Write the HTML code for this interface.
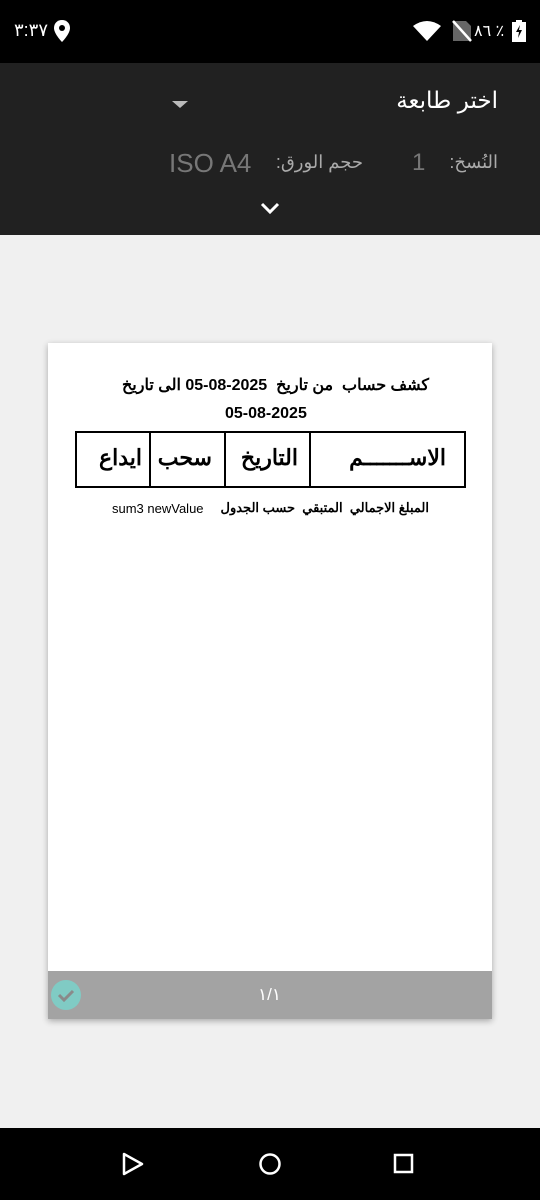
<!DOCTYPE html>
<html><head><meta charset="utf-8"><style>
body{margin:0;width:540px;height:1200px;background:#f0f0f0;position:relative;overflow:hidden;font-family:"Liberation Sans","Noto Sans CJK SC",sans-serif}
.abs{position:absolute}
.t{white-space:nowrap}
</style></head><body>
<div class="abs" style="left:0;top:0;width:540px;height:63px;background:#000"></div>
<div class="abs t" style="left:14px;top:20px;color:#fff;font-size:18px">٣:٣٧</div>
<svg class="abs" style="left:52px;top:19px" width="20" height="24" viewBox="0 0 20 24"><path d="M10 1C5 1 2 4.6 2 9c0 6 8 14 8 14s8-8 8-14c0-4.4-3-8-8-8z" fill="#fff"/><circle cx="10" cy="9" r="3" fill="#000"/></svg>
<svg class="abs" style="left:412px;top:20px" width="30" height="22" viewBox="0 0 30 22"><path d="M1 6Q15 -4 29 6L15 21Z" fill="#fff"/></svg>
<svg class="abs" style="left:452px;top:20px" width="20" height="22" viewBox="0 0 20 22"><path d="M4 1h10l5 5v15H1V1z" fill="#666"/><path d="M1 1L19 21" stroke="#fff" stroke-width="2.5"/></svg>
<div class="abs t" style="left:474px;top:21px;color:#fff;font-size:16px">٨٦ ٪</div>
<svg class="abs" style="left:512px;top:20px" width="14" height="22" viewBox="0 0 14 22"><rect x="4" y="0" width="6" height="3" fill="#fff"/><rect x="0" y="2" width="14" height="20" fill="#fff"/><path d="M8 5L4 12h3l-1 6 4-8H7z" fill="#000"/></svg>

<div class="abs" style="left:0;top:63px;width:540px;height:172px;background:#212121"></div>
<div class="abs t" dir="rtl" style="right:42px;top:87px;color:#fff;font-size:23px">اختر طابعة</div>
<div class="abs" style="left:172px;top:101px;width:0;height:0;border-left:8px solid transparent;border-right:8px solid transparent;border-top:7px solid #bbb"></div>
<div class="abs t" dir="rtl" style="right:42px;top:152px;color:#aaa;font-size:18px">النُسخ:</div>
<div class="abs t" style="left:412px;top:149px;color:#777;font-size:24px">1</div>
<div class="abs t" dir="rtl" style="right:177px;top:152px;color:#aaa;font-size:18px">حجم الورق:</div>
<div class="abs t" style="left:169px;top:148px;color:#777;font-size:26px">ISO A4</div>
<svg class="abs" style="left:259px;top:200px" width="22" height="16" viewBox="0 0 22 16"><path d="M3 4l8 8 8-8" stroke="#fff" stroke-width="3" fill="none"/></svg>

<div class="abs" style="left:48px;top:343px;width:444px;height:676px;background:#fff;box-shadow:0 2px 6px rgba(0,0,0,.3)"></div>
<div class="abs t" dir="rtl" style="right:111px;top:375px;font-size:16px;font-weight:bold;color:#000">كشف حساب &nbsp;من تاريخ &nbsp;2025-08-05 الى تاريخ</div>
<div class="abs t" style="left:225px;top:405px;font-size:16px;font-weight:bold;color:#000">05-08-2025</div>
<div class="abs" style="left:75px;top:431px;width:387px;height:53px;border:2px solid #000"></div>
<div class="abs" style="left:149px;top:431px;width:2px;height:57px;background:#000"></div>
<div class="abs" style="left:224px;top:431px;width:2px;height:57px;background:#000"></div>
<div class="abs" style="left:309px;top:431px;width:2px;height:57px;background:#000"></div>
<div class="abs t" dir="rtl" style="right:94px;top:445px;font-size:22px;font-weight:bold">الاســـــــم</div>
<div class="abs t" dir="rtl" style="right:242px;top:445px;font-size:22px;font-weight:bold">التاريخ</div>
<div class="abs t" dir="rtl" style="right:328px;top:445px;font-size:22px;font-weight:bold">سحب</div>
<div class="abs t" dir="rtl" style="right:398px;top:445px;font-size:22px;font-weight:bold">ايداع</div>
<div class="abs t" dir="rtl" style="right:111px;top:500px;font-size:13px;font-weight:bold">المبلغ الاجمالي &nbsp;المتبقي &nbsp;حسب الجدول</div>
<div class="abs t" style="left:112px;top:501px;font-size:13px">sum3 newValue</div>

<div class="abs" style="left:48px;top:971px;width:444px;height:48px;background:#a3a3a3"></div>
<div class="abs" style="left:51px;top:980px;width:30px;height:30px;border-radius:50%;background:#80cbc4"></div>
<svg class="abs" style="left:51px;top:980px" width="30" height="30" viewBox="0 0 30 30"><path d="M8 15l5 5 9-9" stroke="#8a8a8a" stroke-width="3" fill="none"/></svg>
<div class="abs t" style="left:258px;top:985px;color:#fff;font-size:17px">١/١</div>

<div class="abs" style="left:0;top:1128px;width:540px;height:72px;background:#000"></div>
<svg class="abs" style="left:120px;top:1150px" width="300" height="28" viewBox="0 0 300 28"><path d="M4 4L22 14L4 24Z" stroke="#fff" stroke-width="2.5" fill="none" stroke-linejoin="round"/><circle cx="150" cy="14" r="9.5" stroke="#fff" stroke-width="2.5" fill="none"/><rect x="275" y="5" width="17" height="17" stroke="#fff" stroke-width="2.5" fill="none"/></svg>
</body></html>
